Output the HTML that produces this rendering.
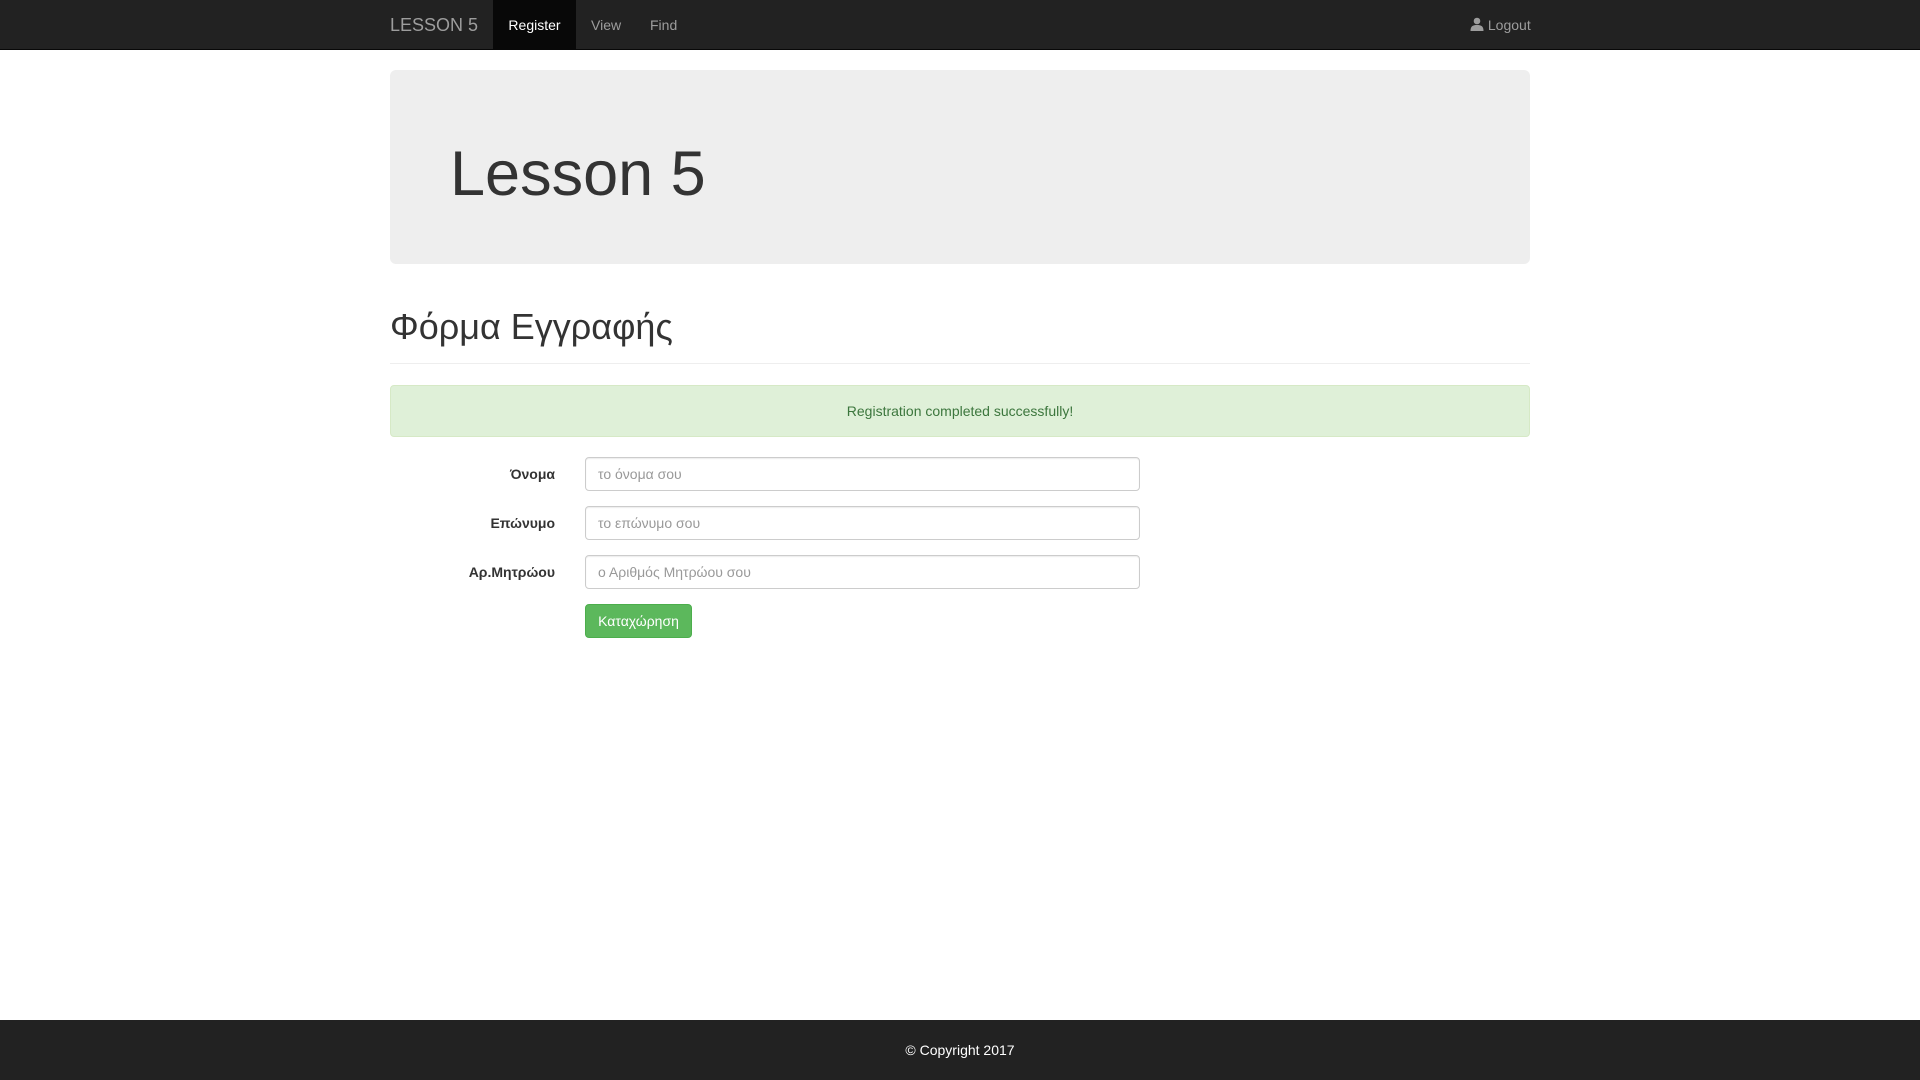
<!DOCTYPE html>
<html><head><meta charset="utf-8"><style>
*{box-sizing:border-box;margin:0;padding:0}
body{width:1920px;height:1080px;font-family:"Liberation Sans","DejaVu Sans",sans-serif;font-size:14px;color:#333;background:#fff;position:relative;overflow:hidden}
.nav{position:absolute;left:0;top:0;width:1920px;height:50px;background:#222;border-bottom:1px solid #080808}
.nav a{position:absolute;top:0;height:50px;line-height:50px;color:#9d9d9d;text-decoration:none;font-size:14px}
.nav a.brand{left:390px;font-size:18px}
.reg{left:493px;width:83px;background:#080808;color:#fff!important;text-align:center}
.jumbo{position:absolute;left:390px;top:70px;width:1140px;height:194px;background:#eee;border-radius:6px}
.jumbo h1{position:absolute;left:60px;top:73px;font-size:63px;font-weight:normal;line-height:1;color:#333}
h2{position:absolute;left:390px;top:307px;font-size:36px;font-weight:normal;line-height:1.1;font-family:"Liberation Sans","DejaVu Sans",sans-serif}
.hr{position:absolute;left:390px;top:363px;width:1140px;height:1px;background:#eee}
.alert{position:absolute;left:390px;top:385px;width:1140px;height:52px;background:#dff0d8;border:1px solid #d6e9c6;border-radius:4px;color:#3c763d;text-align:center;line-height:50px}
.lbl{position:absolute;right:1365px;font-weight:bold;line-height:34px}
.inp{position:absolute;left:585px;width:555px;height:34px;border:1px solid #ccc;border-radius:4px;padding:0 12px;line-height:32px;color:#999;box-shadow:inset 0 1px 1px rgba(0,0,0,.075)}
.btn{position:absolute;left:585px;top:604px;width:107px;height:34px;background:#5cb85c;border:1px solid #4cae4c;border-radius:4px;color:#fff;text-align:center;line-height:32px}
.foot{position:absolute;left:0;top:1020px;width:1920px;height:60px;background:#222;color:#fff;text-align:center;line-height:60px}
</style></head><body>
<div class="nav">
<a class="brand">LESSON 5</a>
<a class="reg">Register</a>
<a style="left:591px">View</a>
<a style="left:650px">Find</a>
<a style="left:1470px"><svg width="14" height="14" viewBox="0 0 14 14" style="vertical-align:-1px"><circle cx="7" cy="4" r="3.3" fill="#9d9d9d"/><path d="M0.5 14 C0.5 9 3 8 7 8 C11 8 13.5 9 13.5 14Z" fill="#9d9d9d"/></svg> Logout</a>
</div>
<div class="jumbo"><h1>Lesson 5</h1></div>
<h2>Φόρμα Εγγραφής</h2>
<div class="hr"></div>
<div class="alert">Registration completed successfully!</div>
<div class="lbl" style="top:457px">Όνομα</div><div class="inp" style="top:457px">το όνομα σου</div>
<div class="lbl" style="top:506px">Επώνυμο</div><div class="inp" style="top:506px">το επώνυμο σου</div>
<div class="lbl" style="top:555px">Αρ.Μητρώου</div><div class="inp" style="top:555px">ο Αριθμός Μητρώου σου</div>
<div class="btn">Καταχώρηση</div>
<div class="foot">© Copyright 2017</div>
</body></html>
